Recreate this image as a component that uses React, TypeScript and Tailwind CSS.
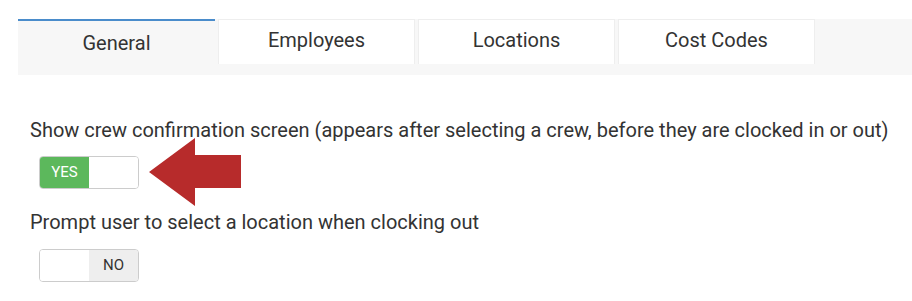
import React from 'react';

const TABS = ['General', 'Employees', 'Locations', 'Cost Codes'];

const Toggle: React.FC<{ on: boolean }> = ({ on }) => (
  <div className="flex w-[100px] h-[33px] border border-[#ccc] rounded-[4px] overflow-hidden text-[15px] leading-none">
    {on ? (
      <>
        <div className="w-[49px] bg-[#5cb85c] text-white flex items-center justify-center">YES</div>
        <div className="flex-1 bg-white" />
      </>
    ) : (
      <>
        <div className="w-[49px] bg-white" />
        <div className="flex-1 bg-[#eee] text-[#333] flex items-center justify-center">NO</div>
      </>
    )}
  </div>
);

// Red call-out arrow pointing at the first toggle
const Arrow = () => (
  <svg width="92" height="68" viewBox="0 0 92 68" className="absolute left-[110px] top-[-18px]">
    <polygon points="0,34 46,0 46,17 92,17 92,50 46,50 46,68" fill="#b72b2b" />
  </svg>
);

export default function App() {
  return (
    <div className="w-[912px] h-[301px] bg-white overflow-hidden font-['Roboto',sans-serif] text-[#333]">
      {/* Tab bar */}
      <div className="mt-[19px] ml-[18px] h-[56px] bg-[#f7f7f7] flex items-start gap-[3px]">
        {TABS.map((t, i) =>
          i === 0 ? (
            <div
              key={t}
              className="w-[197px] h-[45px] border-t-2 border-[#4a8ccb] bg-[#f7f7f7] flex items-center justify-center text-[20px]"
            >
              {t}
            </div>
          ) : (
            <div
              key={t}
              className="w-[197px] h-[45px] border border-b-0 border-[#eee] bg-white flex items-center justify-center text-[20px] pb-[4px]"
            >
              {t}
            </div>
          )
        )}
      </div>

      {/* Settings */}
      <div className="pl-[30px]">
        <div className="mt-[41px] text-[20px] leading-[28px]">
          Show crew confirmation screen (appears after selecting a crew, before they are clocked in or out)
        </div>
        <div className="relative ml-[9px] mt-[12px]">
          <Toggle on />
          <Arrow />
        </div>
        <div className="mt-[19px] text-[20px] leading-[28px]">Prompt user to select a location when clocking out</div>
        <div className="ml-[9px] mt-[13px]">
          <Toggle on={false} />
        </div>
      </div>
    </div>
  );
}
